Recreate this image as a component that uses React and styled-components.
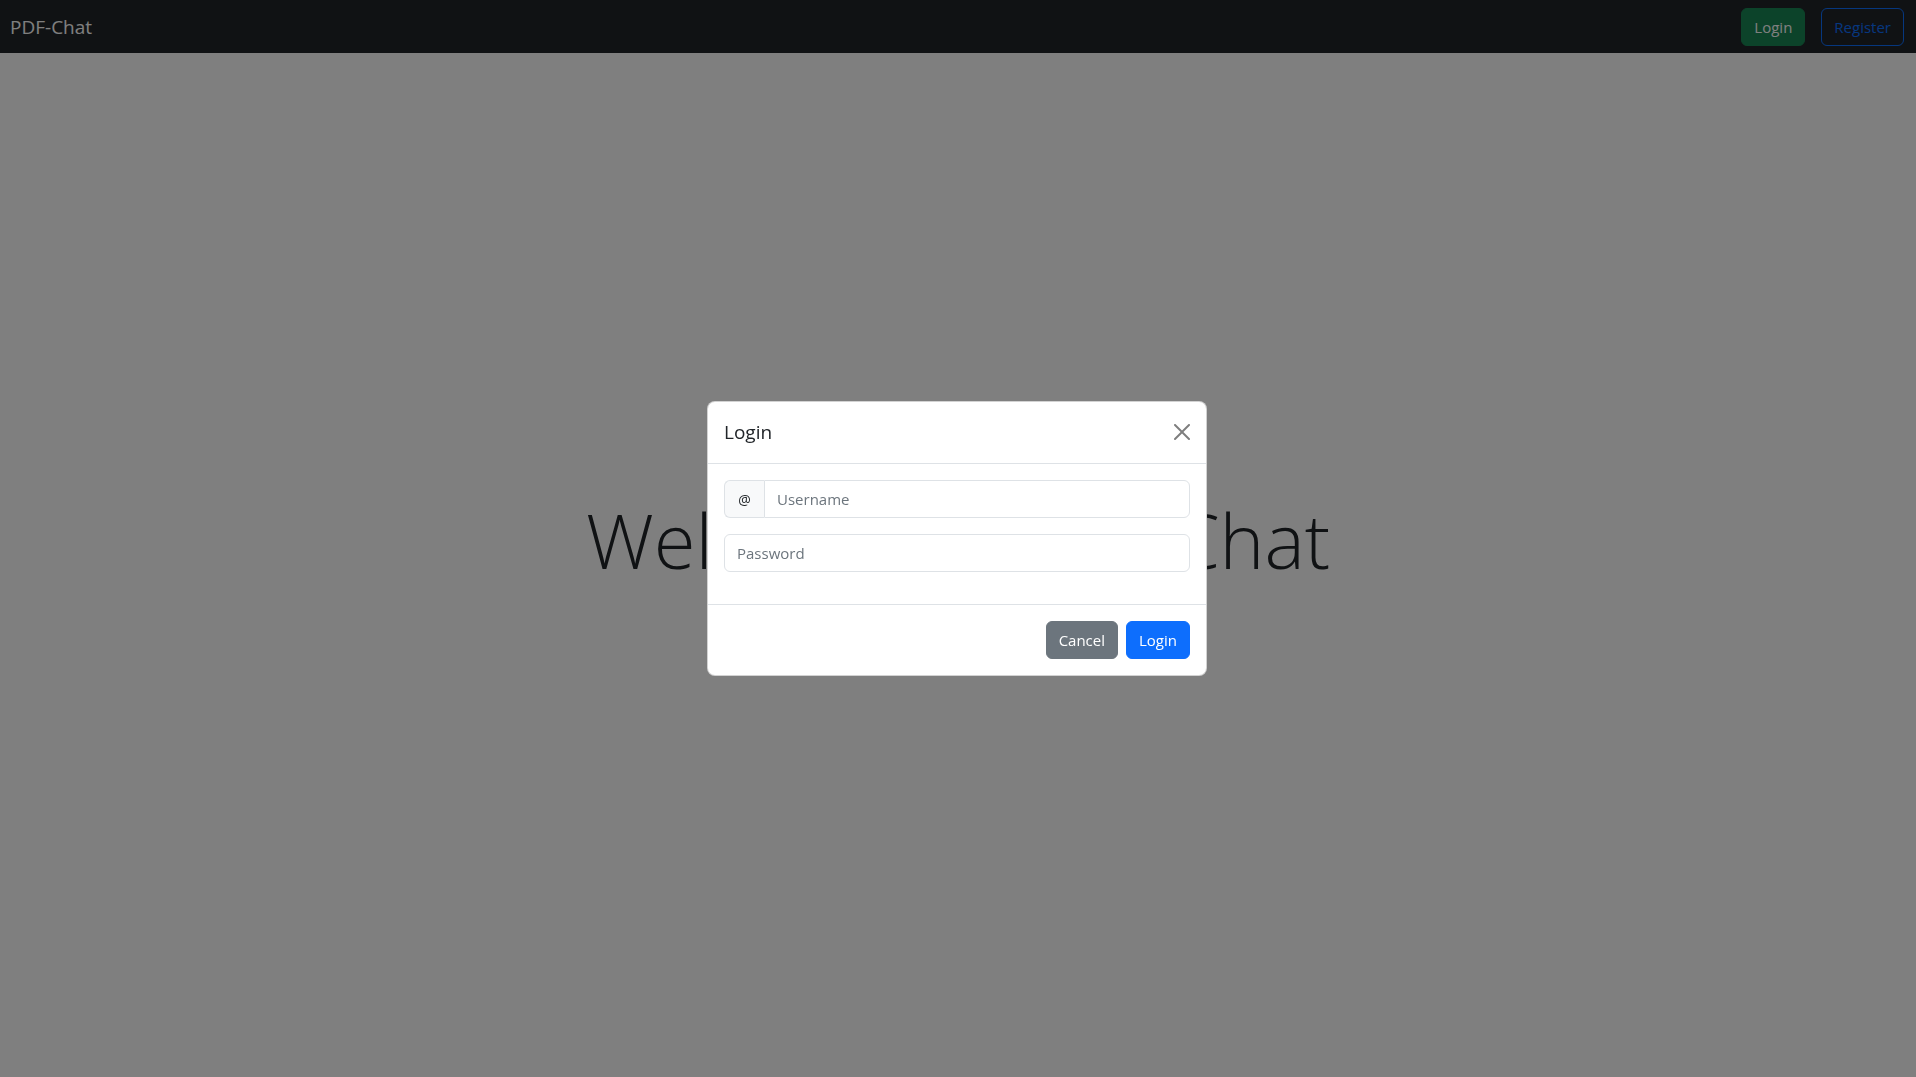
import React from "react";
import styled, { createGlobalStyle } from "styled-components";

const GlobalStyle = createGlobalStyle`
  *, *::before, *::after { box-sizing: border-box; }
  html, body { margin: 0; padding: 0; }
  body {
    font-family: "Open Sans", "Noto Sans", "Liberation Sans", sans-serif;
    font-size: 16px;
    line-height: 1.5;
    color: #212529;
    background: #fff;
    overflow: hidden;
  }
`;

const Page = styled.div`
  min-height: 100vh;
`;

const Navbar = styled.nav`
  height: 53px;
  background: #212529;
  display: flex;
  align-items: center;
  justify-content: space-between;
  padding: 0 12px 0 10px;
`;

const Brand = styled.a`
  color: #fff;
  font-size: 19px;
  text-decoration: none;
  line-height: 30px;
`;

const NavActions = styled.div`
  display: flex;
  align-items: center;
  gap: 16px;
`;

const Button = styled.button`
  font-family: inherit;
  font-size: 15px;
  line-height: 24px;
  padding: 6px 12px;
  border-radius: 6px;
  border: 1px solid ${(p) => p.$border || p.$bg || "transparent"};
  background: ${(p) => p.$bg || "transparent"};
  color: ${(p) => p.$color || "#fff"};
  cursor: pointer;
`;

const Main = styled.main`
  padding-top: 441px;
  text-align: center;
`;

const Display = styled.h1`
  margin: 0;
  font-size: 76px;
  font-weight: 300;
  line-height: 1.2;
  color: #212529;
`;

const Backdrop = styled.div`
  position: fixed;
  inset: 0;
  background: rgba(0, 0, 0, 0.5);
`;

const ModalLayer = styled.div`
  position: fixed;
  inset: 0;
  display: flex;
  align-items: center;
  justify-content: center;
  padding-right: 2px;
`;

const ModalContent = styled.div`
  width: 500px;
  background: #fff;
  border: 1px solid rgba(0, 0, 0, 0.175);
  border-radius: 8px;
  display: flex;
  flex-direction: column;
`;

const ModalHeader = styled.div`
  display: flex;
  align-items: center;
  padding: 15px 16px 16px;
  border-bottom: 1px solid #dee2e6;
`;

const ModalTitle = styled.h5`
  margin: 0;
  font-size: 19px;
  font-weight: 500;
  line-height: 30px;
  flex: 1;
`;

const CloseButton = styled.button`
  width: 32px;
  height: 32px;
  padding: 8px;
  margin: -8px -8px -8px auto;
  border: 0;
  background: transparent;
  opacity: 0.5;
  display: flex;
  cursor: pointer;
`;

const ModalBody = styled.div`
  padding: 16px 16px 0;
`;

const InputGroup = styled.div`
  display: flex;
  margin-bottom: 16px;
`;

const Addon = styled.span`
  display: flex;
  align-items: center;
  justify-content: center;
  width: 40px;
  height: 38px;
  font-size: 14px;
  background: #f8f9fa;
  border: 1px solid #dee2e6;
  border-right: 0;
  border-radius: 6px 0 0 6px;
  color: #212529;
`;

const Input = styled.input`
  flex: 1;
  height: 38px;
  padding: 6px 12px;
  font-family: inherit;
  font-size: 15px;
  color: #212529;
  border: 1px solid #dee2e6;
  border-radius: ${(p) => (p.$joined ? "0 6px 6px 0" : "6px")};
  outline: none;
  &::placeholder { color: #6c757d; }
`;

const ModalFooter = styled.div`
  display: flex;
  justify-content: flex-end;
  gap: 8px;
  padding: 16px;
  border-top: 1px solid #dee2e6;
  margin-top: 16px;
`;

export default function App() {
  return (
    <>
      <GlobalStyle />
      <Page>
        <Navbar>
          <Brand href="#">PDF-Chat</Brand>
          <NavActions>
            <Button $bg="#198754">Login</Button>
            <Button $border="#0d6efd" $color="#0d6efd">Register</Button>
          </NavActions>
        </Navbar>
        <Main>
          <Display>Welcome to PDF-Chat</Display>
        </Main>
      </Page>
      <Backdrop />
      <ModalLayer>
        <ModalContent>
          <ModalHeader>
            <ModalTitle>Login</ModalTitle>
            <CloseButton aria-label="Close">
              <svg width="16" height="16" viewBox="0 0 16 16">
                <path
                  fill="#000"
                  d="M.293.293a1 1 0 0 1 1.414 0L8 6.586 14.293.293a1 1 0 1 1 1.414 1.414L9.414 8l6.293 6.293a1 1 0 0 1-1.414 1.414L8 9.414l-6.293 6.293a1 1 0 0 1-1.414-1.414L6.586 8 .293 1.707a1 1 0 0 1 0-1.414z"
                />
              </svg>
            </CloseButton>
          </ModalHeader>
          <ModalBody>
            <InputGroup>
              <Addon>@</Addon>
              <Input $joined placeholder="Username" />
            </InputGroup>
            <InputGroup>
              <Input type="password" placeholder="Password" />
            </InputGroup>
          </ModalBody>
          <ModalFooter>
            <Button $bg="#6c757d">Cancel</Button>
            <Button $bg="#0d6efd">Login</Button>
          </ModalFooter>
        </ModalContent>
      </ModalLayer>
    </>
  );
}
